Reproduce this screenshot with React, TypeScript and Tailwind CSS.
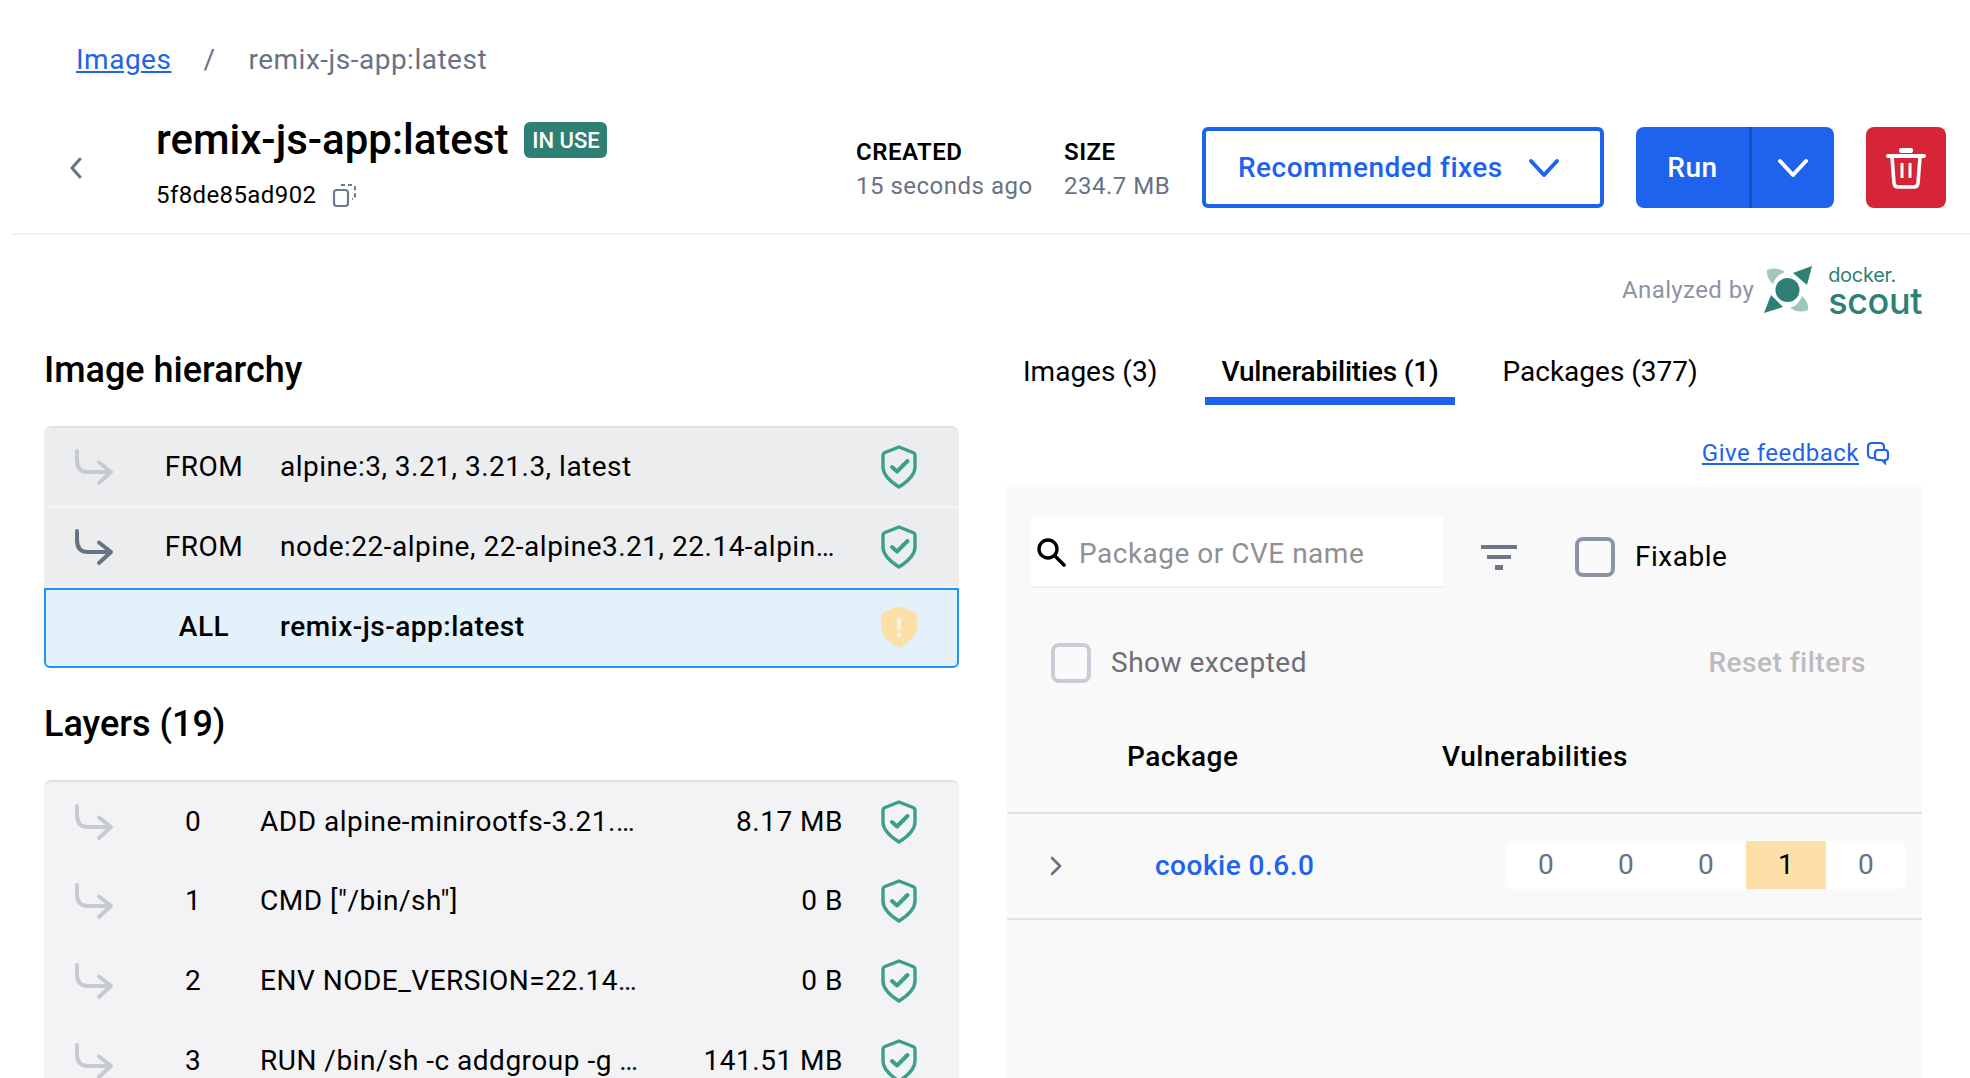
import { ReactNode } from 'react';

const hierarchy = [
  { label: 'FROM', text: 'alpine:3, 3.21, 3.21.3, latest', dark: false },
  { label: 'FROM', text: 'node:22-alpine, 22-alpine3.21, 22.14-alpine, 22.14-alpine3.21, 22, jod', dark: true },
];

const layers = [
  { index: 0, text: 'ADD alpine-minirootfs-3.21.3-aarch64.tar.gz / # buildkit', size: '8.17 MB' },
  { index: 1, text: 'CMD ["/bin/sh"]', size: '0 B' },
  { index: 2, text: 'ENV NODE_VERSION=22.14.0 YARN_VERSION=1.22', size: '0 B' },
  { index: 3, text: 'RUN /bin/sh -c addgroup -g 1000 node', size: '141.51 MB' },
];

const Shield = () => (
  <svg width="36" height="44" viewBox="0 0 36 44" fill="none" className="shrink-0">
    <path
      d="M18 2 L32 7.5 Q34 8.3 34 10.5 V22 Q34 32 18 42 Q2 32 2 22 V10.5 Q2 8.3 4 7.5 Z"
      stroke="#3c9f8b"
      strokeWidth="3.4"
      strokeLinejoin="round"
    />
    <path d="M11 22 L16 26.5 L26.5 16" stroke="#3c9f8b" strokeWidth="4" strokeLinecap="round" strokeLinejoin="round" />
  </svg>
);

const WarnShield = () => (
  <svg width="36" height="44" viewBox="0 0 36 44" className="shrink-0">
    <path d="M18 1 L33 7 Q36 8 36 11 V22 Q36 33 18 43 Q0 33 0 22 V11 Q0 8 3 7 Z" fill="#fde0a8" />
    <rect x="16" y="12" width="4" height="14" rx="2" fill="#f8f3e0" />
    <circle cx="18" cy="30" r="2.4" fill="#f8f3e0" />
  </svg>
);

const Arrow = ({ dark = false }: { dark?: boolean }) => (
  <svg width="40" height="38" viewBox="0 0 40 38" fill="none" className="shrink-0">
    <path
      d="M3 3 V12 Q3 24 14 24 H37 M25 14.5 L37 24 L25 35"
      stroke={dark ? '#677285' : '#c5cad3'}
      strokeWidth="4"
      strokeLinecap="round"
      strokeLinejoin="round"
    />
  </svg>
);

const Chevron = ({ color, className, d, width = 4 }: { color: string; className: string; d: string; width?: number }) => (
  <svg viewBox="0 0 32 20" fill="none" className={className}>
    <path d={d} stroke={color} strokeWidth={width} strokeLinecap="round" strokeLinejoin="round" />
  </svg>
);

const Checkbox = ({ color }: { color: string }) => (
  <span className="block h-[40px] w-[40px] shrink-0 rounded-[8px] border-4 bg-[#fafafa]" style={{ borderColor: color }} />
);

const Logo = () => (
  <svg width="48" height="48" viewBox="0 0 48 48" className="shrink-0">
    <circle cx="23.5" cy="24" r="12" fill="#2e7f74" />
    <path d="M29 7 L48 0 L43 19 Z" fill="#2e7f74" />
    <path d="M0 47 L7 29 L19 41 Z" fill="#2e7f74" />
    <path d="M3 4 Q12 0 21 6 Q12 9 9 18 Q2 12 3 4 Z" fill="#a0c6bf" />
    <path d="M44 44 Q35 48 26 42 Q35 39 38 30 Q45 36 44 44 Z" fill="#a0c6bf" />
  </svg>
);

function Heading({ children }: { children: ReactNode }) {
  return <h2 className="flex h-[50px] items-center text-[36px] font-medium tracking-normal text-black">{children}</h2>;
}

export default function App() {
  return (
    <div className="h-[1078px] w-[1970px] overflow-hidden bg-white font-['Roboto',sans-serif] text-[28px] tracking-[0.5px] text-black">
      <nav className="flex h-[120px] items-center pl-[76px]">
        <a className="text-[#1d63ed] underline">Images</a>
        <span className="ml-[32px] text-[#677285]">/</span>
        <span className="ml-[33px] text-[#677285]">remix-js-app:latest</span>
      </nav>

      <header className="ml-3 flex h-[115px] items-start border-b-2 border-[#f0f1f2]">
        <svg width="14" height="22" viewBox="0 0 14 22" fill="none" className="ml-[57px] mt-[37px] shrink-0">
          <path d="M11 2 L3 11 L11 20" stroke="#677285" strokeWidth="3" strokeLinecap="round" strokeLinejoin="round" />
        </svg>
        <div className="-mt-[2px] ml-[73px] w-[700px]">
          <div className="flex h-[44px] items-center">
            <h1 className="text-[42px] font-medium leading-[44px] tracking-normal">remix-js-app:latest</h1>
            <span className="ml-[16px] flex h-[36px] w-[83px] items-center justify-center rounded-[6px] bg-[#2e7f74] text-[22px] font-medium tracking-normal text-white">
              IN USE
            </span>
          </div>
          <div className="mt-[16px] flex h-[34px] items-center">
            <span className="text-[24px] tracking-[0.4px]">5f8de85ad902</span>
            <svg width="24" height="24" viewBox="0 0 24 24" fill="none" className="ml-[16px]">
              <rect x="2" y="7" width="14" height="16" rx="3" stroke="#6c7a8e" strokeWidth="2.2" />
              <path d="M9 2 H20 Q23 2 23 5 V14 Q23 16 20 16" stroke="#6c7a8e" strokeWidth="2.2" strokeDasharray="4 3" />
            </svg>
          </div>
        </div>
        <div className="mt-[10px] w-[208px] pt-[4px]">
          <div className="h-[34px] text-[24px] font-semibold leading-[36px]">CREATED</div>
          <div className="h-[36px] whitespace-nowrap text-[24px] leading-[36px] text-[#677285]">15 seconds ago</div>
        </div>
        <div className="mt-[10px] w-[138px] pt-[4px]">
          <div className="h-[34px] text-[24px] font-semibold leading-[36px]">SIZE</div>
          <div className="h-[36px] whitespace-nowrap text-[24px] leading-[36px] text-[#677285]">234.7 MB</div>
        </div>
        <button className="mt-[7px] flex h-[81px] w-[402px] items-center rounded-[6px] border-4 border-[#1d63ed] pl-[32px] text-[#1d63ed]">
          <span className="font-medium">Recommended fixes</span>
          <Chevron color="#1d63ed" className="ml-[25px] h-[20px] w-[32px]" d="M3 3 L16 17 L29 3" />
        </button>
        <div className="ml-[32px] mt-[7px] flex h-[81px] w-[198px] overflow-hidden rounded-[8px] bg-[#1d63ed] text-white">
          <div className="flex w-[116px] items-center justify-center border-r-[3px] border-[#1750c4] font-medium">Run</div>
          <div className="flex flex-1 items-center justify-center">
            <Chevron color="#ffffff" className="h-[20px] w-[32px]" d="M3 3 L16 17 L29 3" />
          </div>
        </div>
        <button className="ml-[32px] mt-[7px] flex h-[81px] w-[80px] items-center justify-center rounded-[8px] bg-[#d52536]">
          <svg width="40" height="42" viewBox="0 0 40 42" fill="none">
            <rect x="13" y="1" width="14" height="5" rx="2" fill="#fff" />
            <path d="M2 9 H38" stroke="#fff" strokeWidth="4" strokeLinecap="round" />
            <path d="M6 10 L8 36 Q8.5 40 12 40 H28 Q31.5 40 32 36 L34 10" stroke="#fff" strokeWidth="3.6" />
            <path d="M16 16 V31 M24 16 V31" stroke="#fff" strokeWidth="3" />
          </svg>
        </button>
      </header>

      <div className="flex h-[110px] items-center justify-end pr-[48px]">
        <span className="text-[24px] tracking-[0.4px] text-[#8d93a6]">Analyzed by</span>
        <span className="ml-[10px]">
          <Logo />
        </span>
        <div className="ml-[16px] flex flex-col tracking-normal text-[#2e7f74]">
          <span className="font-['Inter',sans-serif] text-[20px] leading-[22px] tracking-[-0.3px]">docker.</span>
          <span className="font-['Inter',sans-serif] text-[36px] font-medium leading-[30px] tracking-[-0.4px]">scout</span>
        </div>
      </div>

      <main className="flex pl-[44px]">
        <section className="w-[915px]">
          <Heading>Image hierarchy</Heading>
          <div className="mt-[31px] overflow-hidden rounded-t-[8px] border-t-2 border-[#dfe0e2]">
            {hierarchy.map((row) => (
              <div key={row.text} className="box-content flex h-[78px] items-center border-b-2 border-[#f3f4f6] bg-[#ecedef] pl-[30px]">
                <Arrow dark={row.dark} />
                <span className="ml-[14px] w-[152px] text-center">{row.label}</span>
                <span className="w-[556px] truncate">{row.text}</span>
                <span className="ml-[45px]">
                  <Shield />
                </span>
              </div>
            ))}
            <div className="flex h-[80px] items-center rounded-b-[6px] border-2 border-[#2094f0] bg-[#e3f1fb] pb-[2px] pl-[28px]">
              <span className="w-[40px]" />
              <span className="ml-[14px] w-[152px] text-center font-medium">ALL</span>
              <span className="w-[556px] truncate font-medium">remix-js-app:latest</span>
              <span className="ml-[45px]">
                <WarnShield />
              </span>
            </div>
          </div>

          <div className="mt-[31px]">
            <Heading>Layers (19)</Heading>
          </div>
          <div className="mt-[31px] overflow-hidden rounded-t-[8px] border-t-2 border-[#dfe0e2] bg-[#f3f3f6] pb-[20px]">
            {layers.map((row) => (
              <div key={row.index} className={`flex items-center pl-[30px] ${row.index === 0 ? 'h-[79px]' : 'h-[80px]'}`}>
                <Arrow />
                <span className="ml-[12px] w-[134px] text-center">{row.index}</span>
                <span className="w-[380px] truncate">{row.text}</span>
                <span className="flex-1 whitespace-nowrap text-right">{row.size}</span>
                <span className="ml-[38px] mr-[42px]">
                  <Shield />
                </span>
              </div>
            ))}
          </div>
        </section>

        <section className="ml-[48px] w-[915px]">
          <div className="flex h-[60px] gap-8 tracking-normal">
            <div className="flex h-[60px] items-center px-4 pb-[6px]">Images (3)</div>
            <div className="flex h-[60px] items-center border-b-8 border-[#1d63ed] px-4 pt-[2px] font-medium tracking-[-0.2px]">Vulnerabilities (1)</div>
            <div className="flex h-[60px] items-center px-4 pb-[6px]">Packages (377)</div>
          </div>
          <div className="flex h-[80px] items-center justify-end pr-[32px] pt-[16px]">
            <a className="text-[24px] text-[#1d63ed] underline">Give feedback</a>
            <svg width="24" height="24" viewBox="0 0 24 24" fill="none" className="ml-[7px]">
              <path d="M8 17 H6 Q2 17 2 13 V6 Q2 2 6 2 H14 Q18 2 18 6 V8" stroke="#1d63ed" strokeWidth="2.2" />
              <path d="M12 9 H19 Q22 9 22 12 V16 Q22 19 19 19 V22 L16 19 H12 Q9 19 9 16 V12 Q9 9 12 9 Z" stroke="#1d63ed" strokeWidth="2.2" />
            </svg>
          </div>

          <div className="h-[700px] bg-[#f9f9fa]">
            <div className="flex h-[136px] items-start pl-[24px] pt-[32px]">
              <div className="flex h-[71px] w-[412px] items-center border-b-2 border-[#f1f1f3] bg-white pl-[5px]">
                <svg width="30" height="30" viewBox="0 0 30 30" fill="none" className="shrink-0">
                  <circle cx="12" cy="12" r="9" stroke="#000" strokeWidth="3.4" />
                  <path d="M19 19 L28 28" stroke="#000" strokeWidth="3.6" strokeLinecap="round" />
                </svg>
                <span className="ml-[13px] pt-[5px] text-[#8f8f95]">Package or CVE name</span>
              </div>
              <svg width="36" height="25" viewBox="0 0 36 25" className="ml-[38px] mt-[28px] shrink-0">
                <rect x="0" y="0" width="36" height="4" fill="#6b7688" />
                <rect x="6" y="10" width="24" height="4" fill="#6b7688" />
                <rect x="14" y="20" width="8" height="5" fill="#6b7688" />
              </svg>
              <span className="ml-[58px] mt-[20px]">
                <Checkbox color="#8a94a6" />
              </span>
              <span className="ml-[20px] mt-[20px] leading-[40px]">Fixable</span>
            </div>

            <div className="mt-[11px] flex h-[61px] items-center pl-[44px] pr-[56px]">
              <Checkbox color="#c8ccd6" />
              <span className="ml-[20px] text-[#6e6e74]">Show excepted</span>
              <span className="ml-auto font-medium text-[#bcbcc0]">Reset filters</span>
            </div>

            <div className="flex h-[121px] items-start border-b-2 border-[#e2e2e4] pt-[44px] font-medium leading-[40px]">
              <span className="ml-[120px] w-[315px]">Package</span>
              <span>Vulnerabilities</span>
            </div>

            <div className="flex h-[106px] items-center border-b-2 border-[#e2e2e4]">
              <svg width="14" height="20" viewBox="0 0 14 20" fill="none" className="ml-[42px] shrink-0">
                <path d="M3 2 L11 10 L3 18" stroke="#677285" strokeWidth="2.6" strokeLinecap="round" strokeLinejoin="round" />
              </svg>
              <span className="ml-[92px] w-[351px] font-medium text-[#1d63ed]">cookie 0.6.0</span>
              <div className="-mt-[2px] flex h-[48px] overflow-hidden rounded-[8px] bg-white text-[#677285]">
                <span className="flex w-[80px] items-center justify-center">0</span>
                <span className="flex w-[80px] items-center justify-center">0</span>
                <span className="flex w-[80px] items-center justify-center">0</span>
                <span className="flex w-[80px] items-center justify-center bg-[#fde0a8] text-black">1</span>
                <span className="flex w-[80px] items-center justify-center">0</span>
              </div>
            </div>
          </div>
        </section>
      </main>
    </div>
  );
}
